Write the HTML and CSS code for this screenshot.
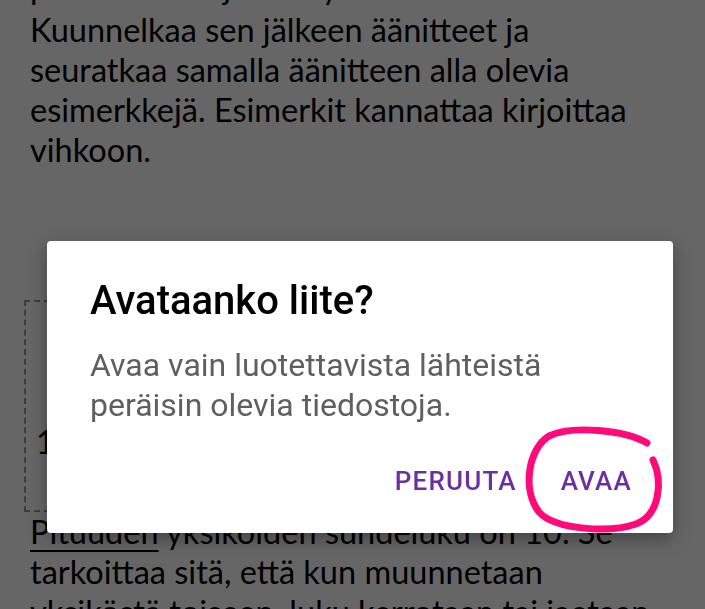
FILE: index.html
```html
<!DOCTYPE html>
<html lang="fi">
<head>
  <meta charset="UTF-8" />
  <meta name="viewport" content="width=device-width, initial-scale=1" />
  <title>Avataanko liite?</title>
  <link rel="stylesheet" href="styles.css">
</head>
<body>
  <!-- Sivun sisältö dialogin takana -->
  <div class="doc">
    <p class="doc-text doc-cut">pankaa ensin jakson yksiköt mieleen.</p>
    <p class="doc-text">
      Kuunnelkaa sen jälkeen äänitteet ja<br>
      seuratkaa samalla äänitteen alla olevia<br>
      esimerkkejä. Esimerkit kannattaa kirjoittaa<br>
      vihkoon.
    </p>

    <div class="figure">
      <span class="figure-num">1</span>
    </div>

    <p class="doc-text">
      <a href="#" class="doc-link">Pituuden</a> yksiköiden suhdeluku on 10. Se<br>
      tarkoittaa sitä, että kun muunnetaan<br>
      yksiköstä toiseen, luku kerrotaan tai jaetaan
    </p>
  </div>

  <!-- Tummennus -->
  <div class="scrim"></div>

  <!-- Dialogi -->
  <div class="dialog">
    <h2 class="dialog-title">Avataanko liite?</h2>
    <p class="dialog-text">Avaa vain luotettavista lähteistä<br>peräisin olevia tiedostoja.</p>
    <div class="dialog-actions">
      <button class="btn">PERUUTA</button>
      <button class="btn">AVAA</button>
    </div>
  </div>

  <!-- Käsin piirretty ympyrä -->
  <svg class="scribble" width="705" height="609" viewBox="0 0 705 609">
    <path d="M647 443 C625 430, 572 425, 549 436 C528 449, 522 490, 539 512 C555 530, 610 533, 636 524 C660 515, 663 481, 653 460"
          fill="none" stroke="#ff0a78" stroke-width="7" stroke-linecap="round" stroke-linejoin="round"/>
  </svg>
</body>
</html>
```

FILE: styles.css
```css
/* Sivun pohja */
body {
  margin: 0;
  background-color: #fff;
  overflow: hidden;
}
.doc {
  padding: 0 30px;
  color: #000;
  font-family: Lato, "Open Sans", sans-serif;
  font-size: 32.5px;
  line-height: 40px;
}
.doc-text {
  margin: 0;
}
/* Yläreunaan leikkautuva rivi */
.doc-cut {
  margin: -33px 0 3px;
}
.doc-link {
  color: #000;
  text-decoration: underline;
  text-decoration-thickness: 2px;
  text-underline-offset: 6px;
}
/* Katkoviivalaatikko */
.figure {
  margin: 130px 0 0 -6px;
  width: 520px;
  height: 212px;
  box-sizing: border-box;
  border: 2px dashed #9a9a9a;
  padding: 120px 0 0 10px;
}
.figure-num {
  font-size: 32px;
}
/* Tummennus */
.scrim {
  position: fixed;
  inset: 0;
  background: rgba(0, 0, 0, 0.6);
}
/* Dialogi */
.dialog {
  position: fixed;
  left: 47px;
  top: 241px;
  width: 626px;
  height: 292px;
  box-sizing: border-box;
  padding: 36px 41px 0 43px;
  background: #fff;
  border-radius: 4px;
  box-shadow: 0 6px 18px rgba(0, 0, 0, 0.35);
  font-family: Roboto, sans-serif;
}
.dialog-title {
  margin: 0;
  font-size: 40px;
  line-height: 48px;
  font-weight: 500;
  color: #000;
}
.dialog-text {
  margin: 20px 0 0;
  font-size: 32px;
  line-height: 40px;
  color: #5f5f5f;
}
.dialog-actions {
  display: flex;
  justify-content: flex-end;
  gap: 44px;
  margin-top: 41px;
}
.btn {
  background: none;
  border: none;
  padding: 0;
  font-family: Roboto, sans-serif;
  font-size: 26px;
  line-height: 30px;
  font-weight: 500;
  letter-spacing: 1.2px;
  color: #6c2ea0;
  cursor: pointer;
}
/* Merkintä dialogin päällä */
.scribble {
  position: fixed;
  left: 0;
  top: 0;
  pointer-events: none;
}
```
